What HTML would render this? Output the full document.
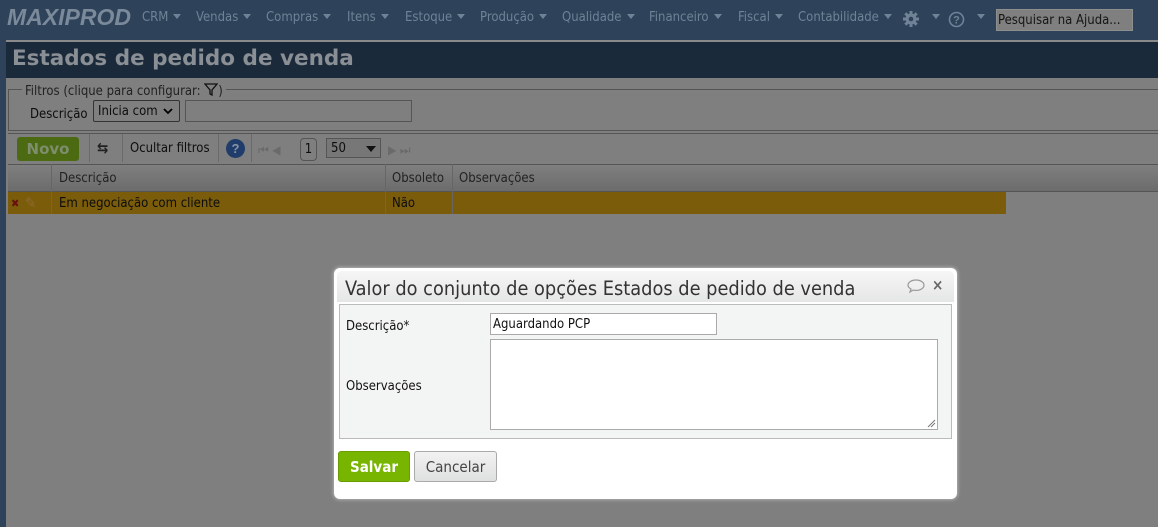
<!DOCTYPE html>
<html><head><meta charset="utf-8"><style>
*{box-sizing:border-box;margin:0;padding:0}
body{width:1158px;height:527px;overflow:hidden;background:#7f7f7f;font-family:"DejaVu Sans Condensed","Liberation Sans",sans-serif;font-size:13px;position:relative;color:#0d0d0d}
.a{position:absolute}
.nav{left:0;top:0;width:1158px;height:40px;background:#2e4259}
.nav span{position:absolute;top:10px;color:#6f8296;font-size:13px}
.tri{display:inline-block;width:0;height:0;border-left:4px solid transparent;border-right:4px solid transparent;border-top:5px solid #6f8296;margin-left:5px;vertical-align:2px}
.logo{left:7px;top:4px;color:#7b8a9a;font:italic bold 23px "Liberation Sans",sans-serif}
</style></head><body>
<div class="a nav">
<div class="a logo">MAXIPROD</div>
<span style="left:142px">CRM<i class="tri"></i></span>
<span style="left:196px">Vendas<i class="tri"></i></span>
<span style="left:266px">Compras<i class="tri"></i></span>
<span style="left:347px">Itens<i class="tri"></i></span>
<span style="left:405px">Estoque<i class="tri"></i></span>
<span style="left:480px">Produção<i class="tri"></i></span>
<span style="left:562px">Qualidade<i class="tri"></i></span>
<span style="left:649px">Financeiro<i class="tri"></i></span>
<span style="left:738px">Fiscal<i class="tri"></i></span>
<span style="left:798px">Contabilidade<i class="tri"></i></span>
<svg class="a" style="left:902px;top:10px" width="18" height="18" viewBox="0 0 18 18"><g fill="#6f8296"><circle cx="9" cy="9" r="5.5"/><rect x="7.5" y="1" width="3" height="16"/><rect x="1" y="7.5" width="16" height="3"/><rect x="7.5" y="1" width="3" height="16" transform="rotate(45 9 9)"/><rect x="7.5" y="1" width="3" height="16" transform="rotate(-45 9 9)"/></g><circle cx="9" cy="9" r="2.3" fill="#2e4259"/></svg>
<span style="left:927px"><i class="tri"></i></span>
<svg class="a" style="left:948px;top:11px" width="17" height="17" viewBox="0 0 17 17"><circle cx="8.5" cy="8.5" r="7" fill="none" stroke="#6f8296" stroke-width="1.6"/><text x="8.5" y="12.5" text-anchor="middle" font-size="11" font-weight="bold" fill="#6f8296" font-family="Liberation Sans">?</text></svg>
<span style="left:972px"><i class="tri"></i></span>
<div class="a" style="left:996px;top:9px;width:137px;height:22px;background:#7f7f7f;border:1px solid #8e8e8e;color:#151515;font-size:13px;padding:3px 1px 1px;white-space:nowrap;overflow:hidden">Pesquisar na Ajuda...</div>
</div>
<div class="a" style="left:0;top:40px;width:6px;height:487px;background:#2e4259"></div>
<div class="a" style="left:6px;top:40px;width:1152px;height:2px;background:#8a8a8a"></div>
<div class="a" style="left:6px;top:42px;width:1152px;height:36px;background:#1b2a3a"></div>
<div class="a" style="left:12px;top:46px;color:#8a8f95;font:bold 21.5px 'DejaVu Sans','Liberation Sans',sans-serif">Estados de pedido de venda</div>
<div class="a" style="left:8px;top:89px;width:1150px;height:42px;border:1px solid #555;border-right:none"></div>
<div class="a" style="left:22px;top:83px;background:#7f7f7f;padding:0 3px;color:#222">Filtros (clique para configurar: <svg width="14" height="13" viewBox="0 0 14 13" style="vertical-align:-1px"><path d="M1 1h12L8 7v5L6 11V7z" fill="none" stroke="#111" stroke-width="1.3"/></svg>)</div>
<div class="a" style="left:30px;top:107px">Descrição</div>
<div class="a" style="left:93px;top:100px;width:87px;height:22px;border:1px solid #333;border-radius:2px;padding:3px 4px 1px">Inicia com <svg width="10" height="8" viewBox="0 0 10 8" style="margin-left:2px"><path d="M1 2l4 4 4-4" fill="none" stroke="#000" stroke-width="1.8"/></svg></div>
<div class="a" style="left:185px;top:100px;width:227px;height:22px;border:1px solid #555"></div>
<div class="a" style="left:8px;top:133px;width:1150px;height:31px;border-top:1px solid #555"></div>
<div class="a" style="left:17px;top:137px;width:62px;height:24px;background:#4c6a12;border-radius:3px;color:#7e8d6c;font:bold 15px 'DejaVu Sans',sans-serif;text-align:center;line-height:24px">Novo</div>
<div class="a" style="left:89px;top:134px;width:1px;height:28px;background:#6a6a6a"></div>
<div class="a" style="left:97px;top:139px;font-weight:bold;color:#222;font-size:15px">⇆</div>
<div class="a" style="left:122px;top:134px;width:1px;height:28px;background:#6a6a6a"></div>
<div class="a" style="left:130px;top:141px">Ocultar filtros</div>
<div class="a" style="left:218px;top:134px;width:1px;height:28px;background:#6a6a6a"></div>
<div class="a" style="left:226px;top:139px;width:19px;height:19px;border-radius:50%;background:#1f3c6a;color:#8794a7;font:bold 13px 'Liberation Sans';text-align:center;line-height:19px">?</div>
<div class="a" style="left:251px;top:134px;width:1px;height:28px;background:#6a6a6a"></div>
<div class="a" style="left:258px;top:143px;color:#6a6a6a;font-size:12px">⏮ ◀</div>
<div class="a" style="left:300px;top:138px;width:17px;height:23px;border:1px solid #555;border-radius:4px;text-align:center;line-height:22px">1</div>
<div class="a" style="left:326px;top:138px;width:55px;height:20px;border:1px solid #555;background:#777;padding:2px 4px 0">50<span style="position:absolute;right:4px;top:7px;border-left:5px solid transparent;border-right:5px solid transparent;border-top:6px solid #111"></span></div>
<div class="a" style="left:388px;top:143px;color:#6a6a6a;font-size:12px">▶ ⏭</div>
<div class="a" style="left:8px;top:164px;width:1150px;height:28px;background:linear-gradient(#7f7f7f,#6c6c6c);border-top:1px solid #555;border-bottom:1px solid #555"></div>
<div class="a" style="left:51px;top:164px;width:1px;height:50px;background:#666"></div>
<div class="a" style="left:385px;top:164px;width:1px;height:50px;background:#666"></div>
<div class="a" style="left:452px;top:164px;width:1px;height:50px;background:#666"></div>
<div class="a" style="left:59px;top:171px;color:#222">Descrição</div>
<div class="a" style="left:392px;top:171px;color:#222">Obsoleto</div>
<div class="a" style="left:459px;top:171px;color:#222">Observações</div>
<div class="a" style="left:8px;top:192px;width:998px;height:22px;background:#7a5c0b"></div>
<div class="a" style="left:51px;top:192px;width:1px;height:22px;background:#666"></div>
<div class="a" style="left:385px;top:192px;width:1px;height:22px;background:#666"></div>
<div class="a" style="left:452px;top:192px;width:1px;height:22px;background:#666"></div>
<div class="a" style="left:11px;top:197px;color:#6a1010;font-size:11px;font-weight:bold">✖</div>
<div class="a" style="left:25px;top:194px;color:#8e6a30;font-size:15px">✎</div>
<div class="a" style="left:59px;top:196px">Em negociação com cliente</div>
<div class="a" style="left:392px;top:196px">Não</div>
<div class="a" style="left:334px;top:268px;width:623px;height:231px;border-radius:6px;background:#fff;box-shadow:0 0 3px 1px #b0b0b0"></div>
<div class="a" style="left:337px;top:271px;width:617px;height:31px;background:linear-gradient(#f6f6f6,#e5e6e6);border-radius:5px 5px 0 0"></div>
<div class="a" style="left:345px;top:277px;font-size:19.8px;color:#333;white-space:nowrap">Valor do conjunto de opções Estados de pedido de venda</div>
<svg class="a" style="left:906px;top:278px" width="20" height="16" viewBox="0 0 20 16"><path d="M10 2c4.5 0 8 2.4 8 5.2S14.5 12.4 10 12.4c-1 0-2-.1-2.8-.4L4 14l1-3C3.2 10 2 8.7 2 7.2 2 4.4 5.5 2 10 2z" fill="none" stroke="#999" stroke-width="1.2"/></svg>
<div class="a" style="left:932px;top:276px;font-size:15px;font-weight:bold;color:#666">×</div>
<div class="a" style="left:339px;top:304px;width:613px;height:135px;background:#f3f4f4;border:1px solid #bbb"></div>
<div class="a" style="left:346px;top:319px;color:#111">Descrição*</div>
<div class="a" style="left:490px;top:313px;width:227px;height:22px;background:#fff;border:1px solid #aaa;padding:3px 2px 1px;color:#111">Aguardando PCP</div>
<div class="a" style="left:490px;top:339px;width:448px;height:91px;background:#fff;border:1px solid #aaa"></div>
<svg class="a" style="left:927px;top:419px" width="9" height="9" viewBox="0 0 9 9"><path d="M1 8L8 1M4 8L8 4" stroke="#777" stroke-width="1"/></svg>
<div class="a" style="left:346px;top:379px;color:#111">Observações</div>
<div class="a" style="left:338px;top:451px;width:72px;height:31px;background:#78b500;border:1px solid #6a9d00;border-radius:3px;color:#fff;font:bold 15px 'DejaVu Sans Condensed','Liberation Sans',sans-serif;text-align:center;line-height:30px">Salvar</div>
<div class="a" style="left:414px;top:451px;width:83px;height:31px;background:linear-gradient(#f2f2f2,#dfe0e0);border:1px solid #aaa;border-radius:3px;color:#444;font-size:15px;text-align:center;line-height:30px">Cancelar</div>
</body></html>
